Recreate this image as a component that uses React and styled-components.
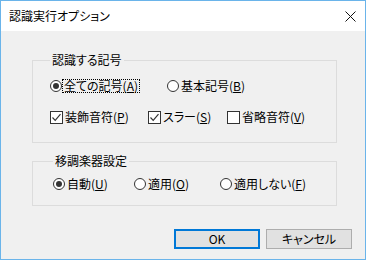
import React from "react";
import styled, { createGlobalStyle } from "styled-components";

const Global = createGlobalStyle`
  html, body { margin: 0; padding: 0; background: #fff; }
  body { font-family: "Noto Sans CJK JP", "Noto Sans", sans-serif; }
`;

const Window = styled.div`
  box-sizing: border-box;
  width: 366px;
  height: 260px;
  border: 1px solid #6ab4ea;
  display: flex;
  flex-direction: column;
  background: #f0f0f0;
  font-family: "Noto Sans CJK JP", "Noto Sans", sans-serif;
  font-size: 12px;
  line-height: 14px;
  color: #000;
  font-feature-settings: "palt";
`;

const TitleBar = styled.div`
  height: 30px;
  flex: none;
  background: #fff;
  display: flex;
  align-items: center;
  justify-content: space-between;
  padding: 0 9px 0 8px;
`;

const Title = styled.span`
  font-size: 12px;
`;

const Body = styled.div`
  flex: 1;
  display: flex;
  flex-direction: column;
  padding: 22px 13px 0 31px;
`;

const Group = styled.fieldset`
  margin: ${(p) => p.$top}px 0 0 0;
  padding: ${(p) => p.$pt}px 0 ${(p) => p.$pb}px ${(p) => p.$pl}px;
  border: 1px solid #dcdcdc;
  width: 305px;
  box-sizing: border-box;
  min-width: 0;
  display: flex;
  flex-direction: column;
  gap: 17px;
`;

const Legend = styled.legend`
  margin-left: 0;
  padding: 0 2px;
  line-height: 14px;
`;

const Row = styled.div`
  display: flex;
  height: 14px;
  align-items: center;
`;

const Option = styled.label`
  display: flex;
  align-items: center;
  width: ${(p) => p.$w}px;
  flex: none;
`;

const RadioMark = styled.span`
  box-sizing: border-box;
  width: 12px;
  height: 12px;
  border: 1px solid #333;
  border-radius: 50%;
  background: #fff;
  display: flex;
  align-items: center;
  justify-content: center;
  flex: none;
  &::after {
    content: "";
    width: 6px;
    height: 6px;
    border-radius: 50%;
    background: #333;
    display: ${(p) => (p.$checked ? "block" : "none")};
  }
`;

const CheckMark = styled.span`
  box-sizing: border-box;
  width: 13px;
  height: 13px;
  border: 1px solid #333;
  background: #fff;
  display: flex;
  align-items: center;
  justify-content: center;
  flex: none;
`;

const Text = styled.span`
  border: 1px dotted ${(p) => (p.$focus ? "#000" : "transparent")};
  padding: 0 1px;
  line-height: 12px;
  white-space: nowrap;
`;

const ButtonRow = styled.div`
  display: flex;
  justify-content: flex-end;
  gap: 6px;
  margin-top: 23px;
`;

const Button = styled.button`
  width: 86px;
  height: 20px;
  box-sizing: border-box;
  background: #e1e1e1;
  border: ${(p) => (p.$primary ? "2px solid #0078d7" : "1px solid #adadad")};
  font: inherit;
  font-feature-settings: "palt";
  color: #000;
  padding: 0;
  display: flex;
  align-items: center;
  justify-content: center;
`;

function Radio({ w, checked, focus, label, keyChar }) {
  return (
    <Option $w={w}>
      <RadioMark $checked={checked} />
      <Text $focus={focus}>
        {label}(<u>{keyChar}</u>)
      </Text>
    </Option>
  );
}

function Check({ w, checked, label, keyChar }) {
  return (
    <Option $w={w}>
      <CheckMark>
        {checked && (
          <svg width="11" height="11" viewBox="0 0 11 11">
            <path d="M1.5 5.5 L4.2 8.3 L9.5 2.2" fill="none" stroke="#333" strokeWidth="1.2" />
          </svg>
        )}
      </CheckMark>
      <Text>
        {label}(<u>{keyChar}</u>)
      </Text>
    </Option>
  );
}

export default function App() {
  return (
    <>
      <Global />
      <Window>
        <TitleBar>
          <Title>認識実行オプション</Title>
          <svg width="11" height="11" viewBox="0 0 11 11">
            <path d="M0.5 0.5 L10.5 10.5 M10.5 0.5 L0.5 10.5" stroke="#111" strokeWidth="1" />
          </svg>
        </TitleBar>
        <Body>
          <Group $top={0} $pt={12} $pb={18} $pl={17}>
            <Legend>認識する記号</Legend>
            <Row>
              <Radio w={117} checked focus label="全ての記号" keyChar="A" />
              <Radio w={100} label="基本記号" keyChar="B" />
            </Row>
            <Row>
              <Check w={98} checked label="装飾音符" keyChar="P" />
              <Check w={79} checked label="スラー" keyChar="S" />
              <Check w={90} label="省略音符" keyChar="V" />
            </Row>
          </Group>
          <Group $top={11} $pt={9} $pb={14} $pl={20}>
            <Legend>移調楽器設定</Legend>
            <Row>
              <Radio w={81} checked label="自動" keyChar="U" />
              <Radio w={86} label="適用" keyChar="O" />
              <Radio w={100} label="適用しない" keyChar="F" />
            </Row>
          </Group>
          <ButtonRow>
            <Button $primary>OK</Button>
            <Button>キャンセル</Button>
          </ButtonRow>
        </Body>
      </Window>
    </>
  );
}
